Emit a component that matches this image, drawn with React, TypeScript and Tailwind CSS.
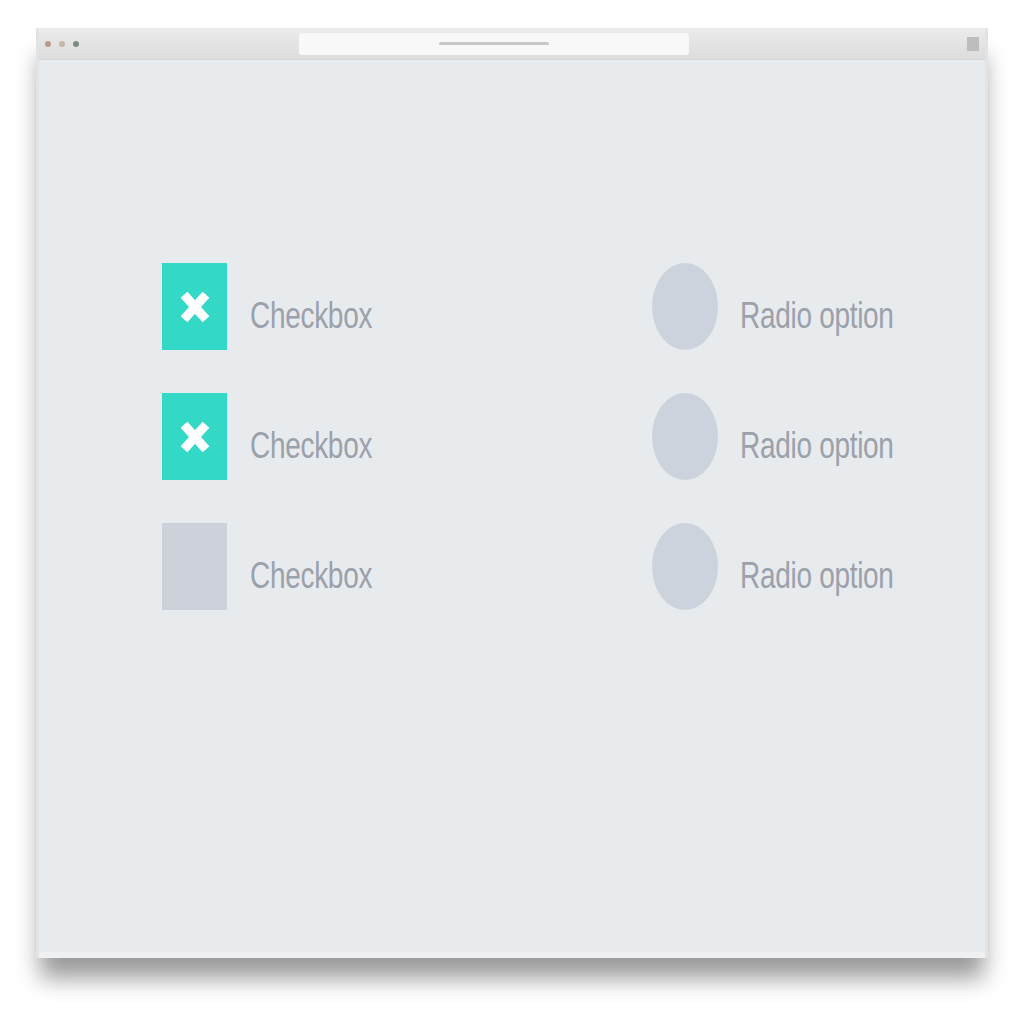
const rows = [true, true, false];

function Cross()
{
	return (
		<svg width="30" height="32" viewBox="0 0 30 32" aria-hidden>
			<path d="M7 7 L23 25 M23 7 L7 25" stroke="#ffffff" strokeWidth="9" strokeLinecap="square" />
		</svg>
	);
}

function Label({ text }: { text: string })
{
	return (
		<span className="inline-block origin-center scale-y-[1.3] pt-[14px] text-[28px] tracking-[-0.3px] text-[#9ba1ab]">
			{text}
		</span>
	);
}

function Checkbox({ checked }: { checked: boolean })
{
	return (
		<div className="flex h-[87px] items-center gap-[23px]">
			<div
				className={
					checked
						? 'flex h-[87px] w-[65px] items-center justify-center bg-[#33d8c6]'
						: 'h-[87px] w-[65px] bg-[#cdd2da]'
				}
			>
				{checked && <Cross />}
			</div>
			<Label text="Checkbox" />
		</div>
	);
}

function Radio()
{
	return (
		<div className="flex h-[87px] items-center gap-[22px]">
			<div className="h-[87px] w-[66px] rounded-[50%] bg-[#cdd3dc]" />
			<Label text="Radio option" />
		</div>
	);
}

export default function App()
{
	return (
		<div className="h-[1024px] w-[1024px] bg-white pl-[36px] pt-[28px] font-['Liberation_Sans',Arial,sans-serif]">
			<div className="flex h-[930px] w-[952px] flex-col border-x-[3px] border-[#e2e3e5] shadow-[0_24px_22px_-4px_rgba(0,0,0,0.4)]">
				{/* Title bar */}
				<div className="flex h-[32px] shrink-0 items-center border-b border-[#d6d6d6] bg-gradient-to-b from-[#ececec] to-[#dcdcdc] px-[6px]">
					<div className="flex gap-[8px]">
						<span className="h-[6px] w-[6px] rounded-full bg-[#b89a8a]" />
						<span className="h-[6px] w-[6px] rounded-full bg-[#c4b9a4]" />
						<span className="h-[6px] w-[6px] rounded-full bg-[#7f8a84]" />
					</div>
					<div className="ml-[220px] flex h-[22px] w-[390px] items-center justify-center rounded-[3px] bg-[#f8f8f8]">
						<span className="h-[3px] w-[110px] rounded bg-[#c8c8c8]" />
					</div>
					<div className="ml-auto h-[14px] w-[12px] bg-[#bdbdbd]" />
				</div>

				{/* Page content */}
				<div className="flex flex-1 border-b-[6px] border-[#eef0f2] bg-[#e8ebee] pl-[123px] pt-[203px]">
					<div className="flex w-[490px] flex-col gap-[43px]">
						{rows.map((c, i) => (
							<Checkbox key={i} checked={c} />
						))}
					</div>
					<div className="flex flex-col gap-[43px]">
						{rows.map((_, i) => (
							<Radio key={i} />
						))}
					</div>
				</div>
			</div>
		</div>
	);
}
